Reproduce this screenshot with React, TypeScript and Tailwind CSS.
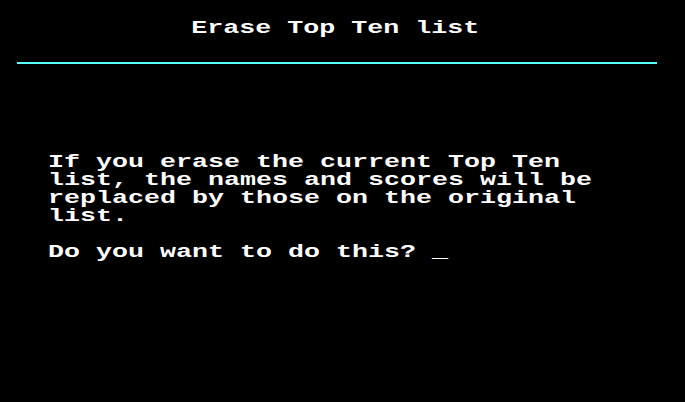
export default function App() {
  const body = [
    'If you erase the current Top Ten',
    'list, the names and scores will be',
    'replaced by those on the original',
    'list.',
    '',
    'Do you want to do this? _',
  ]

  return (
    <div className="h-[402px] w-full overflow-hidden bg-black pt-[19px] font-['Liberation_Mono',monospace] text-[18px] font-bold leading-[18px] text-white">
      {/* Title */}
      <div className="ml-[15px] flex w-[640px] justify-center">
        <div className="origin-center scale-x-[1.4815] whitespace-pre">Erase Top Ten list</div>
      </div>

      {/* Divider */}
      <div className="ml-[17px] mt-[25px] h-[2px] w-[640px] bg-[#55ffff]" />

      {/* Message */}
      <div className="ml-[48px] mt-[89px] origin-left scale-x-[1.4815]">
        {body.map((line, i) => (
          <div key={i} className="h-[18px] whitespace-pre">
            {line}
          </div>
        ))}
      </div>
    </div>
  )
}
